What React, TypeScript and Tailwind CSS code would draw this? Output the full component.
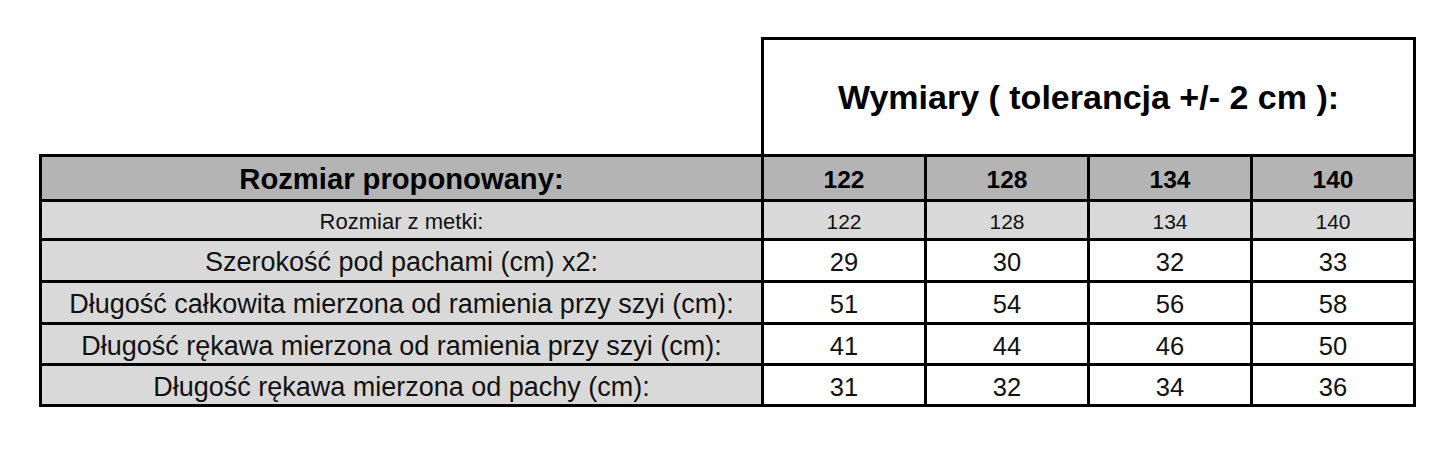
import React from "react";

const sizes = ["122", "128", "134", "140"];
const rows: { label: string; values: string[] }[] = [
  { label: "Szerokość pod pachami (cm) x2:", values: ["29", "30", "32", "33"] },
  { label: "Długość całkowita mierzona od ramienia przy szyi (cm):", values: ["51", "54", "56", "58"] },
  { label: "Długość rękawa mierzona od ramienia przy szyi (cm):", values: ["41", "44", "46", "50"] },
  { label: "Długość rękawa mierzona od pachy (cm):", values: ["31", "32", "34", "36"] },
];

export default function App() {
  return (
    <div className="w-[1450px] h-[449px] bg-white font-['Liberation_Sans',Arial,sans-serif] text-[#111]">
      <div className="pt-[37px] pl-[39px]">
        <div className="ml-[722px] w-[655px] h-[117px] border-[3px] border-b-0 border-black flex items-center justify-center">
          <span className="text-[34px] font-bold text-black leading-none">Wymiary ( tolerancja +/- 2 cm ):</span>
        </div>
        <div className="w-[1377px] grid grid-cols-[719px_160px_160px_160px_160px] grid-rows-[42px_36px_39px_39px_38px_38px] gap-[3px] p-[3px] bg-black">
          <div className="bg-[#b4b4b4] flex items-center justify-center pt-[4px] text-[29.2px] font-bold text-black">
            Rozmiar proponowany:
          </div>
          {sizes.map((s) => (
            <div key={"h" + s} className="bg-[#b4b4b4] flex items-center justify-center pt-[4px] text-[24.5px] font-bold text-black">
              {s}
            </div>
          ))}
          <div className="bg-[#d9d9d9] flex items-center justify-center pt-[3px] text-[22px]">Rozmiar z metki:</div>
          {sizes.map((s) => (
            <div key={"m" + s} className="bg-[#d9d9d9] flex items-center justify-center pt-[3px] text-[21px]">
              {s}
            </div>
          ))}
          {rows.map((r) => (
            <React.Fragment key={r.label}>
              <div className="bg-[#d9d9d9] flex items-center justify-center pt-[4px] text-[27px]">{r.label}</div>
              {r.values.map((v, i) => (
                <div key={i} className="bg-white flex items-center justify-center pt-[4px] text-[25.5px]">
                  {v}
                </div>
              ))}
            </React.Fragment>
          ))}
        </div>
      </div>
    </div>
  );
}
